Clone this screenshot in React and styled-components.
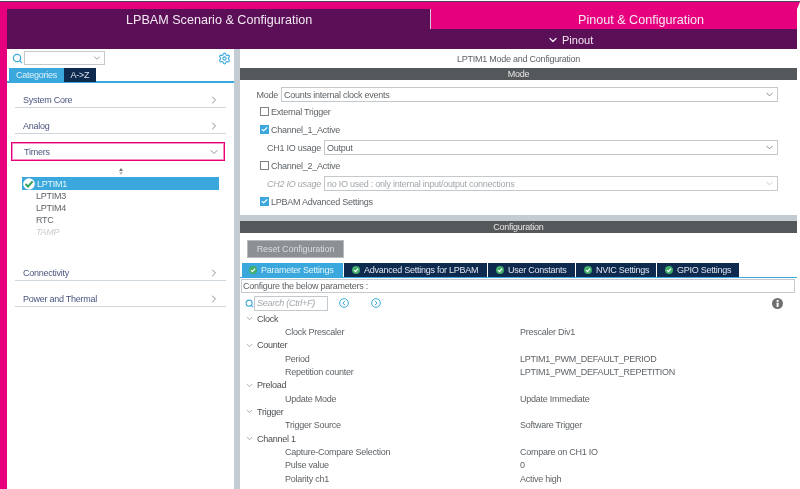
import React from 'react';
import styled, { createGlobalStyle } from 'styled-components';
import { ChevronDown, ChevronRight, Search, Settings, Check } from 'lucide-react';

const GlobalStyle = createGlobalStyle`
  html, body {
    margin: 0;
    padding: 0;
    background: #fff;
    overflow: hidden;
  }
  body {
    font-family: "Liberation Sans", Arial, sans-serif;
  }
`;

const categories = [
  { label: 'System Core' },
  { label: 'Analog' },
  { label: 'Timers', open: true },
  { label: 'Connectivity' },
  { label: 'Power and Thermal' },
];

const timers = [
  { label: 'LPTIM1', selected: true },
  { label: 'LPTIM3' },
  { label: 'LPTIM4' },
  { label: 'RTC' },
  { label: 'TAMP', disabled: true },
];

const configTabs = [
  { label: 'Parameter Settings', width: 102, active: true },
  { label: 'Advanced Settings for LPBAM', width: 144 },
  { label: 'User Constants', width: 88 },
  { label: 'NVIC Settings', width: 81 },
  { label: 'GPIO Settings', width: 83 },
];

const params = [
  { group: 'Clock', rows: [['Clock Prescaler', 'Prescaler Div1']] },
  {
    group: 'Counter',
    rows: [
      ['Period', 'LPTIM1_PWM_DEFAULT_PERIOD'],
      ['Repetition counter', 'LPTIM1_PWM_DEFAULT_REPETITION'],
    ],
  },
  { group: 'Preload', rows: [['Update Mode', 'Update Immediate']] },
  { group: 'Trigger', rows: [['Trigger Source', 'Software Trigger']] },
  {
    group: 'Channel 1',
    rows: [
      ['Capture-Compare Selection', 'Compare on CH1 IO'],
      ['Pulse value', '0'],
      ['Polarity ch1', 'Active high'],
    ],
  },
];

const GreenDot = () => (
  <svg width="8" height="8" viewBox="0 0 12 12">
    <circle cx="6" cy="6" r="6" fill="#3fae6a" />
    <path d="M3 6.2 5.2 8.4 9 4" fill="none" stroke="#fff" strokeWidth="1.8" />
  </svg>
);

const SelectedMark = () => (
  <svg width="12" height="12" viewBox="0 0 12 12">
    <circle cx="6" cy="6" r="5.8" fill="#fff" />
    <path d="M2.6 6 5 8.6 9.6 3.4" fill="none" stroke="#2f9f5b" strokeWidth="2" />
  </svg>
);

const RoundNav = ({ flip }) => (
  <svg width="10" height="10" viewBox="0 0 12 12">
    <circle cx="6" cy="6" r="5.2" fill="none" stroke="#3aa8dc" strokeWidth="1.2" />
    <path d={flip ? 'M5 3.6 7.4 6 5 8.4' : 'M7 3.6 4.6 6 7 8.4'} fill="none" stroke="#3aa8dc" strokeWidth="1.2" />
  </svg>
);

const InfoIcon = () => (
  <svg width="11" height="11" viewBox="0 0 12 12">
    <circle cx="6" cy="6" r="6" fill="#6f6f6f" />
    <rect x="5" y="5" width="2.2" height="4.6" fill="#fff" />
    <rect x="5" y="2.2" width="2.2" height="1.9" fill="#fff" />
  </svg>
);

const App = () => {
  return (
    <Page>
      <GlobalStyle />
      <TopEdge />
      <Frame>
        <Header>
          <TabRow>
            <ScenarioTab>LPBAM Scenario &amp; Configuration</ScenarioTab>
            <PinoutTab>Pinout &amp; Configuration</PinoutTab>
          </TabRow>
          <SubRow>
            <SubLabel>
              <ChevronDown size={12} strokeWidth={2.6} />
              Pinout
            </SubLabel>
          </SubRow>
        </Header>
        <Body>
          <Sidebar>
            <SearchRow>
              <Search size={11} strokeWidth={2.6} color="#3aa8dc" />
              <SearchSelect>
                <ChevronDown size={10} color="#8a8f94" />
              </SearchSelect>
              <Spacer />
              <Settings size={13} color="#3aa8dc" />
            </SearchRow>
            <SideTabs>
              <SideTab $active>Categories</SideTab>
              <SideTab>A-&gt;Z</SideTab>
            </SideTabs>
            <CategoryList>
              {categories.map((cat) => (
                <React.Fragment key={cat.label}>
                  <CategoryRow $open={cat.open}>
                    <span>{cat.label}</span>
                    {cat.open
                      ? <ChevronDown size={12} color="#8a8f94" />
                      : <ChevronRight size={12} color="#8a8f94" />}
                  </CategoryRow>
                  {cat.open && (
                    <TimerPanel>
                      <SortMark>
                        <SortUp />
                        <SortDown />
                      </SortMark>
                      {timers.map((t) => (
                        <TimerRow key={t.label} $selected={t.selected} $disabled={t.disabled}>
                          {t.selected && <MarkSlot><SelectedMark /></MarkSlot>}
                          {t.label}
                        </TimerRow>
                      ))}
                    </TimerPanel>
                  )}
                </React.Fragment>
              ))}
            </CategoryList>
          </Sidebar>
          <Divider />
          <Main>
            <PanelTitle>LPTIM1 Mode and Configuration</PanelTitle>
            <SectionBar>Mode</SectionBar>
            <ModeForm>
              <FieldRow>
                <FieldLabel $width={41}>Mode</FieldLabel>
                <SelectBox>
                  Counts internal clock events
                  <ChevronDown size={11} color="#7d8288" />
                </SelectBox>
              </FieldRow>
              <CheckRow>
                <CheckBox />
                External Trigger
              </CheckRow>
              <CheckRow>
                <CheckBox $checked><Check size={7} strokeWidth={4} color="#fff" /></CheckBox>
                Channel_1_Active
              </CheckRow>
              <FieldRow>
                <FieldLabel $width={84}>CH1 IO usage</FieldLabel>
                <SelectBox>
                  Output
                  <ChevronDown size={11} color="#7d8288" />
                </SelectBox>
              </FieldRow>
              <CheckRow>
                <CheckBox />
                Channel_2_Active
              </CheckRow>
              <FieldRow>
                <FieldLabel $width={84} $muted>CH2 IO usage</FieldLabel>
                <SelectBox $muted>
                  no IO used : only internal input/output connections
                  <ChevronDown size={11} color="#c2c5c8" />
                </SelectBox>
              </FieldRow>
              <CheckRow>
                <CheckBox $checked><Check size={7} strokeWidth={4} color="#fff" /></CheckBox>
                LPBAM Advanced Settings
              </CheckRow>
            </ModeForm>
            <SectionGap />
            <SectionBar>Configuration</SectionBar>
            <ResetButton>Reset Configuration</ResetButton>
            <ConfigTabs>
              {configTabs.map((tab) => (
                <ConfigTab key={tab.label} $active={tab.active} $width={tab.width}>
                  <GreenDot />
                  {tab.label}
                </ConfigTab>
              ))}
            </ConfigTabs>
            <HintBox>Configure the below parameters :</HintBox>
            <ToolRow>
              <Search size={9} strokeWidth={2.8} color="#3aa8dc" />
              <SearchInput>Search (Ctrl+F)</SearchInput>
              <NavSlot><RoundNav /></NavSlot>
              <NavSlot><RoundNav flip /></NavSlot>
              <Spacer />
              <InfoSlot><InfoIcon /></InfoSlot>
            </ToolRow>
            <Tree>
              {params.map((g) => (
                <React.Fragment key={g.group}>
                  <GroupRow>
                    <ChevronDown size={9} color="#8a8f94" />
                    {g.group}
                  </GroupRow>
                  {g.rows.map(([name, value]) => (
                    <ParamRow key={name}>
                      <ParamName>{name}</ParamName>
                      <span>{value}</span>
                    </ParamRow>
                  ))}
                </React.Fragment>
              ))}
            </Tree>
          </Main>
        </Body>
      </Frame>
    </Page>
  );
};

export default App;

const Page = styled.div`
  width: 800px;
  height: 489px;
  overflow: hidden;
  background: #fff;
  display: flex;
  flex-direction: column;
  font-size: 9px;
  letter-spacing: -0.25px;
  filter: blur(0.3px);
`;

const TopEdge = styled.div`
  height: 1px;
  background: #fff;
  border-bottom: 1px solid #4b4658;
`;

const Frame = styled.div`
  flex: 1;
  min-height: 0;
  border-top: 7px solid #e6007e;
  border-left: 7px solid #e6007e;
  border-right: 3px solid #fff;
  display: flex;
  flex-direction: column;
`;

const Header = styled.div`
  height: 40px;
  background: #5a0f57;
  color: #f4e8f2;
`;

const TabRow = styled.div`
  height: 20px;
  display: flex;
`;

const ScenarioTab = styled.div`
  width: 424px;
  border-right: 1px solid #d9c9d6;
  padding-left: 119px;
  box-sizing: border-box;
  font-size: 12.6px;
  letter-spacing: 0;
  line-height: 22px;
`;

const PinoutTab = styled.div`
  flex: 1;
  background: #e6007e;
  padding-left: 147px;
  font-size: 12.6px;
  letter-spacing: 0;
  line-height: 22px;
`;

const SubRow = styled.div`
  height: 20px;
  box-sizing: border-box;
  padding: 2px 0 0 540px;
  display: flex;
`;

const SubLabel = styled.div`
  display: flex;
  align-items: center;
  gap: 3px;
  font-size: 11px;
  letter-spacing: 0;
`;

const Body = styled.div`
  flex: 1;
  min-height: 0;
  display: flex;
`;

const Sidebar = styled.div`
  width: 227px;
  flex: none;
`;

const SearchRow = styled.div`
  height: 18px;
  box-sizing: border-box;
  padding: 2px 3px 2px 5px;
  display: flex;
  align-items: center;
  gap: 1px;
`;

const SearchSelect = styled.div`
  width: 81px;
  height: 14px;
  box-sizing: border-box;
  border: 1px solid #c4c9cd;
  display: flex;
  align-items: center;
  justify-content: flex-end;
  padding-right: 2px;
`;

const Spacer = styled.div`
  flex: 1;
`;

const SideTabs = styled.div`
  margin-top: 1px;
  height: 14px;
  display: flex;
  padding-left: 2px;
  box-shadow: inset 0 -1px 0 #3aa8dc;
  border-bottom: 1px solid #3aa8dc;
  margin-bottom: -1px;
`;

const SideTab = styled.div`
  width: ${(p) => (p.$active ? '55px' : '32px')};
  height: 14px;
  text-align: center;
  line-height: 14px;
  background: ${(p) => (p.$active ? '#3aa8dc' : '#0e2a4f')};
  color: ${(p) => (p.$active ? '#dff1fa' : '#dfe6ee')};
`;

const CategoryList = styled.div`
  padding: 0 8px;
`;

const CategoryRow = styled.div`
  height: 26px;
  box-sizing: border-box;
  padding: 10px 6px 0 8px;
  display: flex;
  align-items: center;
  justify-content: space-between;
  color: #4c5680;
  border-bottom: 1px solid #cfd6dc;

  ${(p) => p.$open && `
    height: 19px;
    margin: 8px 1px 0 -4px;
    padding: 0 4px 0 12px;
    border: 1px solid #e6007e;
    outline: 1px solid #f58cc4;
    outline-offset: -2px;
  `}
`;

const TimerPanel = styled.div`
  height: 94px;
  box-sizing: border-box;
  padding: 5px 0 0 7px;
`;

const SortMark = styled.div`
  width: 197px;
  height: 11px;
  display: flex;
  flex-direction: column;
  align-items: center;
  gap: 1px;
  padding-top: 2px;
  box-sizing: border-box;
`;

const SortUp = styled.div`
  width: 0;
  height: 0;
  border-left: 2.5px solid transparent;
  border-right: 2.5px solid transparent;
  border-bottom: 3px solid #6d7175;
`;

const SortDown = styled.div`
  width: 0;
  height: 0;
  border-left: 2.5px solid transparent;
  border-right: 2.5px solid transparent;
  border-top: 3px solid #b9bcbf;
`;

const TimerRow = styled.div`
  width: 197px;
  height: ${(p) => (p.$selected ? '13px' : '12px')};
  box-sizing: border-box;
  padding-left: 14px;
  display: flex;
  align-items: center;
  font-style: ${(p) => (p.$disabled ? 'italic' : 'normal')};
  color: ${(p) => (p.$selected ? '#e8f5fb' : p.$disabled ? '#c8ccd0' : '#5f6468')};
  background: ${(p) => (p.$selected ? '#3aa8dc' : 'transparent')};
`;

const MarkSlot = styled.span`
  margin: 0 2px 0 -13px;
  display: flex;
`;

const Divider = styled.div`
  width: 6px;
  flex: none;
  background: #c3ccd2;
`;

const Main = styled.div`
  flex: 1;
  min-width: 0;
  display: flex;
  flex-direction: column;
`;

const PanelTitle = styled.div`
  height: 19px;
  text-align: center;
  line-height: 20px;
  color: #5f6468;
`;

const SectionBar = styled.div`
  height: 12px;
  flex: none;
  background: #55585a;
  color: #e4e6e7;
  text-align: center;
  line-height: 12px;
`;

const ModeForm = styled.div`
  height: 135px;
  box-sizing: border-box;
  flex: none;
  padding-top: 7px;
  display: flex;
  flex-direction: column;
  color: #5f6468;
`;

const FieldRow = styled.div`
  width: 538px;
  height: 15px;
  display: flex;
  align-items: center;
  margin-bottom: 3px;

  &:first-child {
    margin-bottom: 2px;
  }
`;

const FieldLabel = styled.div`
  width: ${(p) => p.$width}px;
  box-sizing: border-box;
  flex: none;
  text-align: right;
  padding-right: 3px;
  font-style: ${(p) => (p.$muted ? 'italic' : 'normal')};
  color: ${(p) => (p.$muted ? '#a3a7aa' : '#5f6468')};
`;

const SelectBox = styled.div`
  flex: 1;
  height: 15px;
  box-sizing: border-box;
  border: 1px solid #c4c9cd;
  padding: 0 2px;
  display: flex;
  align-items: center;
  justify-content: space-between;
  color: ${(p) => (p.$muted ? '#a3a7aa' : '#5f6468')};
`;

const CheckRow = styled.div`
  height: 15px;
  display: flex;
  align-items: center;
  gap: 2px;
  padding-left: 20px;
  margin-bottom: 3px;
`;

const CheckBox = styled.span`
  width: 7px;
  height: 7px;
  display: flex;
  align-items: center;
  justify-content: center;
  border: 1px solid ${(p) => (p.$checked ? '#3aa8dc' : '#7d8084')};
  background: ${(p) => (p.$checked ? '#3aa8dc' : '#fff')};
`;

const SectionGap = styled.div`
  height: 6px;
  flex: none;
  background: #c3ccd2;
`;

const ResetButton = styled.div`
  width: 97px;
  height: 18px;
  margin: 7px 0 5px 7px;
  flex: none;
  background: #8c9094;
  border: 1px solid #b6babd;
  box-sizing: border-box;
  text-align: center;
  line-height: 16px;
  letter-spacing: -0.1px;
  color: #d9dcde;
`;

const ConfigTabs = styled.div`
  height: 14px;
  flex: none;
  display: flex;
  padding-left: 2px;
  border-bottom: 1px solid #3aa8dc;
`;

const ConfigTab = styled.div`
  width: ${(p) => p.$width}px;
  flex: none;
  box-sizing: border-box;
  padding-left: ${(p) => (p.$active ? '7px' : '8px')};
  display: flex;
  align-items: center;
  gap: 4px;
  white-space: nowrap;
  border-right: 1px solid #fff;
  background: ${(p) => (p.$active ? '#3aa8dc' : '#0e2a4f')};
  color: ${(p) => (p.$active ? '#e2f3fb' : '#dfe6ee')};
`;

const HintBox = styled.div`
  height: 14px;
  margin: 1px 2px 0 1px;
  flex: none;
  box-sizing: border-box;
  border: 1px solid #c4c9cd;
  padding-left: 1px;
  line-height: 12px;
  color: #5f6468;
`;

const ToolRow = styled.div`
  height: 14px;
  margin-top: 3px;
  flex: none;
  display: flex;
  align-items: center;
  padding-left: 5px;
`;

const SearchInput = styled.div`
  width: 74px;
  height: 15px;
  box-sizing: border-box;
  border: 1px solid #c4c9cd;
  padding-left: 2px;
  line-height: 13px;
  font-style: italic;
  color: #a3a7aa;
`;

const NavSlot = styled.span`
  width: 32px;
  display: flex;
  justify-content: center;
`;

const InfoSlot = styled.span`
  display: flex;
  padding-right: 14px;
`;

const Tree = styled.div`
  margin-top: 2px;
  display: grid;
  grid-auto-rows: 13.33px;
  color: #5f6468;
`;

const GroupRow = styled.div`
  display: flex;
  align-items: center;
  gap: 3px;
  padding-left: 5px;
  color: #4a4e52;
`;

const ParamRow = styled.div`
  display: flex;
  align-items: center;
  padding-left: 45px;
`;

const ParamName = styled.span`
  width: 235px;
  flex: none;
`;
